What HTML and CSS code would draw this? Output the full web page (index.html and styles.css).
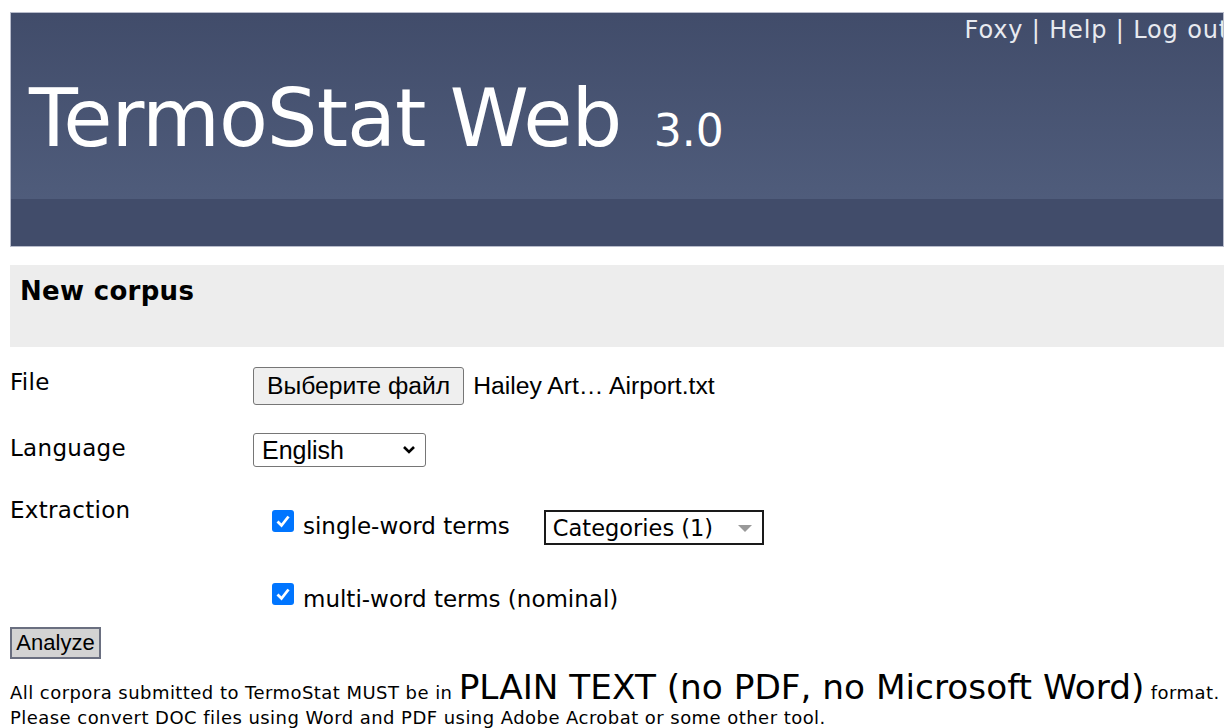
FILE: index.html
```html
<!DOCTYPE html>
<html lang="en">
<head>
<meta charset="utf-8">
<title>TermoStat Web 3.0</title>
<link rel="stylesheet" href="styles.css">
</head>
<body>
<div class="header">
  <div class="header-top">
    <div class="header-links"><a href="#">Foxy</a> | <a href="#">Help</a> | <a href="#">Log out</a></div>
    <h1 class="title">TermoStat Web <span class="version">3.0</span></h1>
  </div>
  <div class="header-band"></div>
</div>

<div class="section-head">New corpus</div>

<form class="corpus-form">
  <div class="row row-file">
    <div class="label">File</div>
    <div class="field">
      <span class="file-btn">Выберите файл</span>
      <span class="file-name">Hailey Art… Airport.txt</span>
    </div>
  </div>
  <div class="row row-lang">
    <div class="label">Language</div>
    <div class="field">
      <span class="lang-select">English
        <svg class="chev" width="14" height="10" viewBox="0 0 14 10"><path d="M2 2 L7 7 L12 2" fill="none" stroke="#000" stroke-width="2.6"/></svg>
      </span>
    </div>
  </div>
  <div class="row row-extract">
    <div class="label">Extraction</div>
    <div class="field extract">
      <div class="opt opt-single">
        <span class="check"><svg width="22" height="22" viewBox="0 0 22 22"><path d="M5.5 11.5 L9.5 15.5 L16.5 6.5" fill="none" stroke="#fff" stroke-width="2.8"/></svg></span>
        <span class="opt-text">single-word terms</span>
        <span class="cat-select">Categories (1)<span class="tri"></span></span>
      </div>
      <div class="opt opt-multi">
        <span class="check"><svg width="22" height="22" viewBox="0 0 22 22"><path d="M5.5 11.5 L9.5 15.5 L16.5 6.5" fill="none" stroke="#fff" stroke-width="2.8"/></svg></span>
        <span class="opt-text">multi-word terms (nominal)</span>
      </div>
    </div>
  </div>
  <div class="actions"><span class="analyze">Analyze</span></div>
</form>

<p class="notice">All corpora submitted to TermoStat MUST be in <span class="big">PLAIN TEXT (no PDF, no Microsoft Word)</span> format.<br>Please convert DOC files using Word and PDF using Adobe Acrobat or some other tool.</p>
</body>
</html>
```

FILE: styles.css
```css
html, body {
  margin: 0;
  padding: 0;
  background: #fff;
}

body {
  padding: 12px 0 0 10px;
  font-family: "DejaVu Sans", Verdana, sans-serif;
  color: #000;
  overflow: hidden;
}

.header {
  width: 1214px;
  box-sizing: border-box;
  border: 1px solid #b8bccb;
  overflow: hidden;
}

.header-top {
  height: 186px;
  background: linear-gradient(#414c6a, #4f5c7b);
  position: relative;
}

/* account links sit in the top-right corner over the banner */
.header-links {
  position: absolute;
  right: -6px;
  top: 3px;
  color: #e8eaf0;
  font-size: 24px;
  letter-spacing: 0.85px;
  white-space: nowrap;
}

.header-links a {
  color: #e8eaf0;
  text-decoration: none;
}

.title {
  margin: 0;
  padding: 66px 0 0 18px;
  color: #fff;
  font-weight: normal;
  font-size: 80px;
  line-height: 80px;
  letter-spacing: -1px;
}

.version {
  font-size: 44px;
  letter-spacing: 0;
  margin-left: 8px;
}

.header-band {
  height: 47px;
  background: #414c6a;
}

.section-head {
  width: 1214px;
  box-sizing: border-box;
  margin-top: 18px;
  height: 82px;
  padding: 11px 10px;
  background: #ededed;
  font-weight: bold;
  font-size: 26px;
  letter-spacing: 0.3px;
}

.corpus-form {
  margin: 0;
}

.row {
  display: flex;
}

.label {
  width: 243px;
  font-size: 23px;
  letter-spacing: 0.3px;
  flex: none;
}

.row-file {
  margin-top: 20px;
  height: 66px;
}

.row-file .label {
  padding-top: 2px;
}

.field {
  display: flex;
  align-items: flex-start;
}

.file-btn {
  display: inline-block;
  box-sizing: border-box;
  height: 38px;
  padding: 0 13px;
  border: 1px solid #767676;
  border-radius: 3px;
  background: #efefef;
  font-family: "Liberation Sans", Arial, sans-serif;
  font-size: 24.7px;
  line-height: 36px;
}

.file-name {
  margin-left: 9px;
  font-family: "Liberation Sans", Arial, sans-serif;
  font-size: 24.7px;
  line-height: 38px;
}

.row-lang {
  height: 64px;
}

.row-lang .label {
  padding-top: 2px;
}

.lang-select {
  display: flex;
  align-items: center;
  justify-content: space-between;
  box-sizing: border-box;
  width: 173px;
  height: 34px;
  padding: 0 9px 0 8px;
  border: 1px solid #767676;
  border-radius: 3px;
  font-family: "Liberation Sans", Arial, sans-serif;
  font-size: 25px;
}

.extract {
  flex-direction: column;
  padding-left: 19px;
  padding-top: 13px;
}

.opt {
  display: flex;
  align-items: flex-start;
  font-size: 23px;
}

.check {
  flex: none;
  width: 22px;
  height: 22px;
  border-radius: 3px;
  background: #0075ff;
  display: inline-flex;
  margin-right: 9px;
}

.opt-text {
  padding-top: 3px;
  line-height: 27px;
}

.opt-single {
  height: 35px;
}

.cat-select {
  display: flex;
  align-items: center;
  box-sizing: border-box;
  width: 220px;
  height: 35px;
  margin-left: 34px;
  padding-left: 7px;
  border: 2px solid #1a1a1a;
  font-size: 22.5px;
  position: relative;
}

/* the small grey arrow of the category dropdown */
.tri {
  position: absolute;
  right: 10px;
  top: 13px;
  width: 0;
  height: 0;
  border-left: 7px solid transparent;
  border-right: 7px solid transparent;
  border-top: 7px solid #999;
}

.opt-multi {
  margin-top: 38px;
  height: 28px;
}

.actions {
  margin-top: 16px;
}

.analyze {
  display: inline-block;
  box-sizing: border-box;
  height: 32px;
  width: 91px;
  border: 2px solid #6a6f80;
  background: #d3d3d3;
  font-family: "Liberation Sans Narrow", "Liberation Sans", Arial, sans-serif;
  font-size: 22px;
  line-height: 28px;
  text-align: center;
}

.notice {
  margin: 16px 0 0;
  font-size: 18px;
  letter-spacing: 0.45px;
  line-height: 25px;
  white-space: nowrap;
}

.big {
  font-size: 34.3px;
  letter-spacing: 0;
  line-height: 25px;
}
```
